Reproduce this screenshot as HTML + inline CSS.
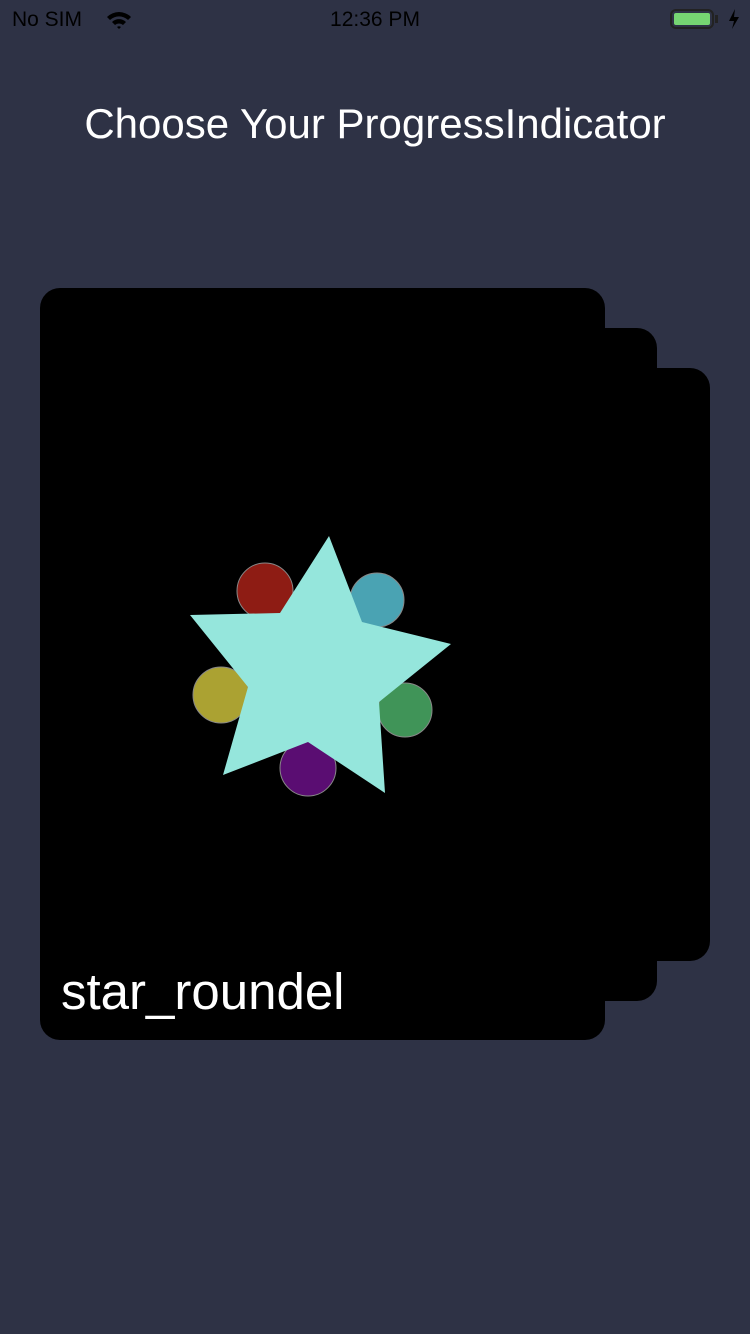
<!DOCTYPE html>
<html><head><meta charset="utf-8"><style>
body{margin:0;width:750px;height:1334px;background:#2e3245;position:relative;overflow:hidden;font-family:"Liberation Sans",sans-serif}
.c{position:absolute;background:#000;border-radius:20px}
</style></head><body>
<div style="position:absolute;left:12px;top:8px;font-size:21px;color:#000">No SIM</div>
<svg style="position:absolute;left:106px;top:10px" width="26" height="20" viewBox="0 0 26 20"><path d="M1 7 A17 17 0 0 1 25 7 L22 10 A13 13 0 0 0 4 10Z M6 12 A10 10 0 0 1 20 12 L17 15 A6 6 0 0 0 9 15Z M11 17 A3 3 0 0 1 15 17 L13 19Z" fill="#000"/></svg>
<div style="position:absolute;left:0;width:750px;top:8px;text-align:center;font-size:21px;color:#000">12:36 PM</div>
<div style="position:absolute;left:670px;top:9px;width:44px;height:20px;border:2px solid #222;border-radius:6px;box-sizing:border-box;padding:2px"><div style="background:#76d572;width:100%;height:100%;border-radius:2px"></div></div>
<div style="position:absolute;left:715px;top:15px;width:3px;height:8px;background:#222"></div>
<svg style="position:absolute;left:728px;top:9px" width="12" height="20" viewBox="0 0 12 20"><path d="M7 0 L1 12 H6 L4 20 L11 8 H6Z" fill="#000"/></svg>
<div style="position:absolute;left:0;width:750px;top:100px;text-align:center;font-size:42px;color:#fff">Choose Your ProgressIndicator</div>
<div class="c" style="left:140px;top:368px;width:570px;height:593px"></div>
<div class="c" style="left:90px;top:328px;width:567px;height:673px"></div>
<div class="c" style="left:40px;top:288px;width:565px;height:752px"></div>
<svg style="position:absolute;left:0;top:0" width="750" height="1334">
<g stroke="#888" stroke-width="1">
<circle cx="265" cy="591" r="28" fill="#8e1c14"/>
<circle cx="377" cy="600" r="27" fill="#4aa3b3"/>
<circle cx="405" cy="710" r="27" fill="#409458"/>
<circle cx="308" cy="768" r="28" fill="#5a0d72"/>
<circle cx="221" cy="695" r="28" fill="#aba232"/>
</g>
<polygon points="329,536 362,622 451,644 379,702 385,793 308,742 223,775 248,687 190,615 280,613" fill="#95e6dc"/>
</svg>
<div style="position:absolute;left:61px;top:962px;font-size:51px;color:#fff">star_roundel</div>
</body></html>
